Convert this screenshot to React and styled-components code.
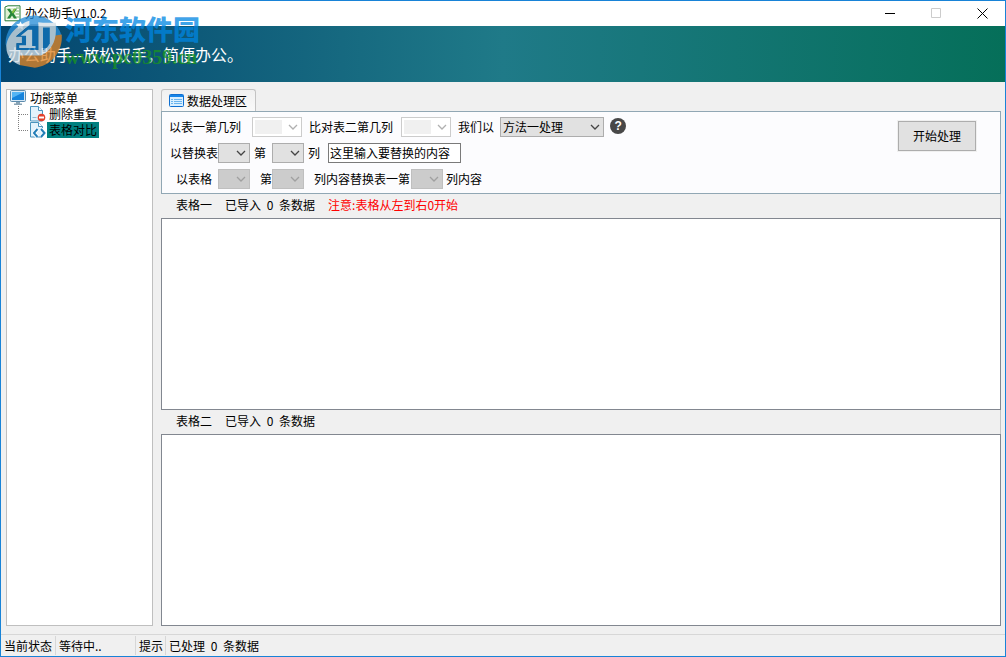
import React, { useState } from 'react';
import styled, { createGlobalStyle } from 'styled-components';

const GlobalStyle = createGlobalStyle`
  * {
    box-sizing: border-box;
  }

  body {
    margin: 0;
  }

  body, button, input, select {
    font-family: "Noto Sans CJK SC", sans-serif;
    font-size: 12px;
    line-height: 16px;
    color: #000;
  }
`;

const Window = styled.div`
  position: relative;
  display: flex;
  flex-direction: column;
  min-height: 100vh;
  border: 1px solid #1883d7;
  background: #f0f0f0;
`;

const TitleBar = styled.header`
  display: flex;
  align-items: center;
  height: 25px;
  padding-left: 3px;
  background: #fff;
`;

const WindowTitle = styled.h1`
  flex: 1;
  margin: 0;
  padding: 0 0 2px 4px;
  font-size: 12px;
  font-weight: 400;
`;

const WindowButton = styled.button`
  display: flex;
  align-items: center;
  justify-content: center;
  width: 46px;
  height: 24px;
  padding: 0;
  border: 0;
  background: transparent;
`;

const Banner = styled.div`
  display: flex;
  align-items: center;
  height: 56px;
  padding-left: 7px;
  background: linear-gradient(90deg, #03456f, #1f7a88 50%, #056f59);
  color: #fff;
  font-size: 16px;
  line-height: 24px;
`;

const Watermark = styled.div`
  position: absolute;
  top: 12px;
  left: 4px;
  display: flex;
  align-items: flex-start;
  gap: 3px;
  pointer-events: none;
`;

const WatermarkText = styled.div`
  display: flex;
  flex-direction: column;
`;

const WatermarkName = styled.span`
  color: rgba(0, 134, 226, 0.75);
  font-size: 27px;
  font-weight: 900;
  line-height: 32px;
`;

const WatermarkUrl = styled.span`
  color: rgba(26, 150, 30, 0.75);
  font-family: "Liberation Serif", serif;
  font-size: 20px;
  font-weight: 700;
  line-height: 24px;
`;

const Body = styled.div`
  flex: 1;
  display: grid;
  grid-template-columns: 147px 1fr;
  gap: 8px;
  padding: 7px 4px 8px 5px;
`;

const Sidebar = styled.nav`
  padding: 0 3px;
  border: 1px solid #bfbfbf;
  background: #fff;
`;

const TreeRow = styled.div`
  display: flex;
  align-items: center;
  height: 16px;
  gap: 4px;
`;

const TreeChildren = styled.ul`
  margin: 0 0 0 8px;
  padding: 0;
  list-style: none;
`;

const TreeItem = styled.li`
  display: flex;
  align-items: center;
  height: 16px;
  gap: 1px;
`;

const TreeButton = styled.button`
  height: 16px;
  padding: 0 2px;
  border: 0;
  background: ${({ $selected }) => ($selected ? '#008080' : 'transparent')};
`;

const Main = styled.main`
  display: flex;
  flex-direction: column;
  min-width: 0;
`;

const Tabs = styled.div`
  display: flex;
`;

const Tab = styled.button`
  display: flex;
  align-items: center;
  gap: 3px;
  height: 22px;
  padding: 0 8px 0 7px;
  border: 1px solid #c3c3c3;
  border-bottom: 0;
  border-radius: 3px 3px 0 0;
  background: linear-gradient(#f0f0f0, #fafafa);
`;

const Panel = styled.section`
  display: flex;
  align-items: flex-start;
  justify-content: space-between;
  padding: 4px 24px 3px 7px;
  border: 1px solid #91a7b4;
  background: #fcfcfe;
`;

const Form = styled.div`
  display: grid;
  gap: 4px;
`;

const Row = styled.div`
  display: flex;
  align-items: center;
  height: 22px;
  white-space: nowrap;
`;

const Label = styled.label`
  padding-left: ${({ $before = 0 }) => $before}px;
  padding-right: ${({ $after = 0 }) => $after}px;
`;

const SelectBox = styled.span`
  position: relative;
  display: inline-flex;
  width: ${({ $width }) => $width}px;
  height: 20px;
`;

const selectColors = {
  normal: { border: '#adadad', background: '#e1e1e1', arrow: '#444' },
  disabled: { border: '#bfbfbf', background: '#ccc', arrow: '#a0a0a0' },
  editable: { border: '#ccc', background: '#fff', arrow: '#b0b0b0' },
};

const NativeSelect = styled.select`
  appearance: none;
  width: 100%;
  padding: 0 16px 0 2px;
  border: 1px solid ${({ $kind }) => selectColors[$kind].border};
  border-radius: 0;
  background: ${({ $kind }) => selectColors[$kind].background};
  opacity: 1;
  ${({ $kind }) =>
    $kind === 'editable' &&
    `
    background: linear-gradient(#f0f0f0, #f0f0f0) 2px 2px / 27px 14px no-repeat #fff;
  `}
`;

const Arrow = styled.svg`
  position: absolute;
  top: 7px;
  right: 4px;
  pointer-events: none;
`;

const TextInput = styled.input`
  width: 133px;
  height: 20px;
  margin-left: 8px;
  padding: 0 1px 2px;
  border: 1px solid #7a7a7a;
  background: #fff;
`;

const HelpButton = styled.button`
  width: 16px;
  height: 16px;
  margin: 0 0 2px 6px;
  padding: 0;
  border: 0;
  border-radius: 50%;
  background: #484848;
  color: #fff;
  font-family: "Liberation Sans", sans-serif;
  font-weight: 700;
`;

const StartButton = styled.button`
  width: 78px;
  height: 30px;
  margin-top: 5px;
  border: 1px solid #adadad;
  background: #e1e1e1;
  outline: 1px solid #f0f0f0;
`;

const TableCaption = styled.div`
  display: flex;
  align-items: center;
  gap: 13px;
  height: 24px;
  padding: 0 0 2px 15px;
  border-right: 1px solid #c3c3c3;
`;

const Count = styled.span`
  padding: 0 3px;
`;

const Warning = styled.span`
  color: #f00;
`;

const DataArea = styled.section`
  flex: 1;
  border: 1px solid #828790;
  background: #fff;
`;

const StatusBar = styled.footer`
  display: flex;
  height: 22px;
  border-top: 1px solid #d7d7d7;
`;

const StatusCell = styled.div`
  min-width: ${({ $width }) => ($width ? `${$width}px` : 'auto')};
  margin: 1px 0;
  padding: 2px 0 0 3px;
  border-right: ${({ $last }) => ($last ? '0' : '1px solid #d7d7d7')};
`;

const ExcelIcon = () => (
  <svg width="17" height="17" viewBox="0 0 17 17" aria-hidden="true">
    <path d="M1 2 4 .8h12v15H1z" fill="#fff" stroke="#267d37" />
    <path d="M2 3h10v11H2z" fill="#dff0d1" />
    <path d="M12 3h3M12 6h3M12 9h3M12 12h3" stroke="#78b66b" />
    <path d="m3 4 3-.2 2 3 2-3h3L9.700 8.500 13 13.500h-3l-2-3-2 3H3l3.300-5z" fill="#27863a" />
    <path d="m10 4 2 0-3 4.500-1.300-1.300z" fill="#8cc63f" />
  </svg>
);

const MonitorIcon = () => (
  <svg width="16" height="16" viewBox="0 0 16 16" aria-hidden="true">
    <rect x=".5" y=".5" width="15" height="11" rx="1" fill="#d7e8f5" stroke="#5d8cad" />
    <path d="M2 2h12v8H2z" fill="#1583dc" />
    <path d="M2 2h12L2 8z" fill="#54b4f4" />
    <path d="M6 12h4v1.500h2V15H4v-1.500h2z" fill="#88a3b5" />
  </svg>
);

const PageShape = () => (
  <path d="M1.500.5h8l4 4v10.500h-12z" fill="#e3f2fb" stroke="#4a94bd" />
);

const DeletePageIcon = () => (
  <svg width="17" height="16" viewBox="0 0 17 16" aria-hidden="true">
    <PageShape />
    <path d="M9.500.5v4h4" fill="#fff" stroke="#4a94bd" />
    <path d="M3.500 11.500h4" stroke="#8fb9d0" />
    <circle cx="12.500" cy="11.500" r="3.800" fill="#e1422c" />
    <path d="M10 11.500h5" stroke="#fff" strokeWidth="2" />
  </svg>
);

const ComparePageIcon = () => (
  <svg width="17" height="16" viewBox="0 0 17 16" aria-hidden="true">
    <PageShape />
    <path d="M9.500.5v4h4" fill="#fff" stroke="#4a94bd" />
    <path d="m8.500 7-3.500 4 3.500 4M12 7l3.500 4-3.500 4" fill="none" stroke="#fff" strokeWidth="4" />
    <path d="m8.500 7-3.500 4 3.500 4M12 7l3.500 4-3.500 4" fill="none" stroke="#247fb8" strokeWidth="2" />
  </svg>
);

const Branch = ({ last }) => (
  <svg width="10" height="16" viewBox="0 0 10 16" aria-hidden="true">
    <path
      d={last ? 'M.5 0v8.500M1 8.500h9' : 'M.5 0v16M1 8.500h9'}
      fill="none"
      stroke="#808080"
      strokeDasharray="1 1"
    />
  </svg>
);

const ListIcon = () => (
  <svg width="15" height="13" viewBox="0 0 15 13" aria-hidden="true">
    <rect x=".5" y=".5" width="14" height="12" rx="1" fill="#d9efff" stroke="#0f6fd0" />
    <path d="M1 1h13v2H1z" fill="#1685e8" />
    <path d="M2 5.500h2M2 7.500h2M2 9.500h2M5 5.500h8M5 7.500h8M5 9.500h8" stroke="#6ab4ee" />
  </svg>
);

const SiteLogo = () => (
  <svg width="57" height="55" viewBox="0 0 168 160" aria-hidden="true">
    <g opacity=".78">
      <path d="M2 92A84 80 0 0 1 167 66L140 72 128 32 60 44 24 74 10 110z" fill="#2a8fd8" />
      <path d="M167 62C172 112 136 156 88 160L42 152 42 118 112 118C134 104 144 84 145 66z" fill="#e08526" />
      <path
        d="M72 22C34 34 4 68 4 100 4 128 24 146 44 152V124H106C134 112 150 84 150 52V28H112L98 26V108H34V88H50V68H32L72 34z"
        fill="#d5e0e7"
      />
      <path d="M32 68 76 32H98V108H34V88H50V68z" fill="#1173bb" />
      <path d="M46 66 68 48H80V96H90V102H42V94H62V66z" fill="#e4edf2" />
      <path d="M112 42H132V88C128 98 121 104 112 108z" fill="#1173bb" />
      <path d="m46 24 4 8 9 1-7 6 1 9-8-5-8 4 2-9-6-6 9-1z" fill="#fff" />
    </g>
  </svg>
);

const Select = ({ id, width, kind = 'normal', children }) => (
  <SelectBox $width={width}>
    <NativeSelect id={id} $kind={kind} disabled={kind !== 'normal'}>
      {children}
    </NativeSelect>
    <Arrow width="10" height="7" viewBox="0 0 10 7" aria-hidden="true">
      <path d="m1 1 4 4 4-4" fill="none" stroke={selectColors[kind].arrow} strokeWidth="1.300" />
    </Arrow>
  </SelectBox>
);

const menuItems = [
  { name: '删除重复', icon: <DeletePageIcon /> },
  { name: '表格对比', icon: <ComparePageIcon /> },
];

const App = () => {
  const [selected, setSelected] = useState('表格对比');
  const [replacement, setReplacement] = useState('这里输入要替换的内容');

  return (
    <>
      <GlobalStyle />
      <Window>
        <TitleBar>
          <ExcelIcon />
          <WindowTitle>办公助手V1.0.2</WindowTitle>
          <WindowButton aria-label="最小化">
            <svg width="11" height="11"><path d="M0 5.500h10" stroke="#000" /></svg>
          </WindowButton>
          <WindowButton aria-label="最大化" disabled>
            <svg width="11" height="11"><path d="M.5.500h9v9h-9z" fill="none" stroke="#ccc" /></svg>
          </WindowButton>
          <WindowButton aria-label="关闭">
            <svg width="11" height="11"><path d="m.5.500 10 10m0-10-10 10" stroke="#000" /></svg>
          </WindowButton>
        </TitleBar>
        <Banner>办公助手--放松双手，简便办公。</Banner>

        <Body>
          <Sidebar>
            <TreeRow>
              <MonitorIcon />
              功能菜单
            </TreeRow>
            <TreeChildren>
              {menuItems.map((item, index) => (
                <TreeItem key={item.name}>
                  <Branch last={index === menuItems.length - 1} />
                  {item.icon}
                  <TreeButton
                    $selected={selected === item.name}
                    onClick={() => setSelected(item.name)}
                  >
                    {item.name}
                  </TreeButton>
                </TreeItem>
              ))}
            </TreeChildren>
          </Sidebar>

          <Main>
            <Tabs role="tablist">
              <Tab role="tab" aria-selected="true">
                <ListIcon />
                数据处理区
              </Tab>
            </Tabs>

            <Panel>
              <Form>
                <Row>
                  <Label htmlFor="first-column" $after={11}>以表一第几列</Label>
                  <Select id="first-column" width={50} kind="editable" />
                  <Label htmlFor="second-column" $before={7} $after={8}>比对表二第几列</Label>
                  <Select id="second-column" width={50} kind="editable" />
                  <Label htmlFor="method" $before={7} $after={6}>我们以</Label>
                  <Select id="method" width={104}>
                    <option>方法一处理</option>
                  </Select>
                  <HelpButton aria-label="帮助">?</HelpButton>
                </Row>
                <Row>
                  <Label htmlFor="replace-table" $before={1}>以替换表</Label>
                  <Select id="replace-table" width={32} />
                  <Label htmlFor="replace-column" $before={4} $after={6}>第</Label>
                  <Select id="replace-column" width={32} />
                  <Label htmlFor="replacement" $before={4}>列</Label>
                  <TextInput
                    id="replacement"
                    value={replacement}
                    onChange={(e) => setReplacement(e.target.value)}
                  />
                </Row>
                <Row>
                  <Label htmlFor="source-table" $before={7} $after={6}>以表格</Label>
                  <Select id="source-table" width={32} kind="disabled" />
                  <Label htmlFor="source-column" $before={10}>第</Label>
                  <Select id="source-column" width={32} kind="disabled" />
                  <Label htmlFor="target-column" $before={10} $after={1}>列内容替换表一第</Label>
                  <Select id="target-column" width={32} kind="disabled" />
                  <Label htmlFor="target-column" $before={3}>列内容</Label>
                </Row>
              </Form>
              <StartButton>开始处理</StartButton>
            </Panel>

            <TableCaption>
              <span>表格一</span>
              <span>已导入 <Count>0</Count> 条数据</span>
              <Warning>注意:表格从左到右0开始</Warning>
            </TableCaption>
            <DataArea aria-label="表格一" />
            <TableCaption>
              <span>表格二</span>
              <span>已导入 <Count>0</Count> 条数据</span>
            </TableCaption>
            <DataArea aria-label="表格二" />
          </Main>
        </Body>

        <StatusBar>
          <StatusCell $width={55}>当前状态</StatusCell>
          <StatusCell $width={80}>等待中..</StatusCell>
          <StatusCell $width={30}>提示</StatusCell>
          <StatusCell $last>已处理 <Count>0</Count> 条数据</StatusCell>
        </StatusBar>

        <Watermark aria-hidden="true">
          <SiteLogo />
          <WatermarkText>
            <WatermarkName>河东软件园</WatermarkName>
            <WatermarkUrl>www.pc0359.cn</WatermarkUrl>
          </WatermarkText>
        </Watermark>
      </Window>
    </>
  );
};

export default App;
